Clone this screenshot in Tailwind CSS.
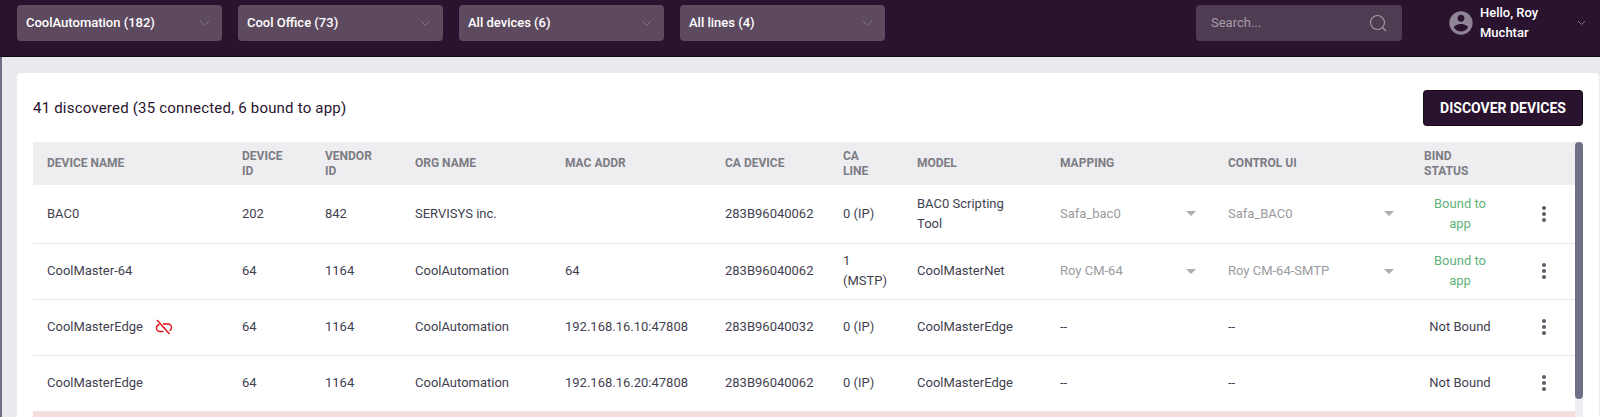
<!DOCTYPE html>
<html lang="en">
  <head>
    <meta charset="UTF-8" />
    <title>Devices</title>
    <script src="https://cdn.jsdelivr.net/npm/@tailwindcss/browser@4"></script>
  </head>
  <body class="bg-[#e9e9ef] font-['Roboto',sans-serif] overflow-hidden">
    <div class="flex flex-col h-[417px] overflow-hidden">
      <!-- top bar -->
      <div class="flex items-start h-[57px] shrink-0 bg-[#29132e] pl-[17px] pt-[5px] border-b border-black/60">
        <div class="flex items-center justify-between w-[205px] h-9 rounded bg-[#5e4a5f] pl-[9px] pr-3 mr-[16px] text-[13px] font-medium text-white">
          <span>CoolAutomation (182)</span>
          <svg class="w-[11px] h-[7px] text-[#85758a]" viewBox="0 0 11 7" fill="none" stroke="currentColor" stroke-width="1"><path d="M1 1l4.500 4.500L10 1" /></svg>
        </div>
        <div class="flex items-center justify-between w-[205px] h-9 rounded bg-[#5e4a5f] pl-[9px] pr-3 mr-[16px] text-[13px] font-medium text-white">
          <span>Cool Office (73)</span>
          <svg class="w-[11px] h-[7px] text-[#85758a]" viewBox="0 0 11 7" fill="none" stroke="currentColor" stroke-width="1"><path d="M1 1l4.500 4.500L10 1" /></svg>
        </div>
        <div class="flex items-center justify-between w-[205px] h-9 rounded bg-[#5e4a5f] pl-[9px] pr-3 mr-[16px] text-[13px] font-medium text-white">
          <span>All devices (6)</span>
          <svg class="w-[11px] h-[7px] text-[#85758a]" viewBox="0 0 11 7" fill="none" stroke="currentColor" stroke-width="1"><path d="M1 1l4.500 4.500L10 1" /></svg>
        </div>
        <div class="flex items-center justify-between w-[205px] h-9 rounded bg-[#5e4a5f] pl-[9px] pr-3 text-[13px] font-medium text-white">
          <span>All lines (4)</span>
          <svg class="w-[11px] h-[7px] text-[#85758a]" viewBox="0 0 11 7" fill="none" stroke="currentColor" stroke-width="1"><path d="M1 1l4.500 4.500L10 1" /></svg>
        </div>
        <div class="flex items-center justify-between w-[206px] h-9 rounded bg-[#4e3d52] ml-auto pl-[15px] pr-[15px] text-[13px] text-[#a79ca9]">
          <span>Search...</span>
          <svg class="w-[18px] h-[18px] text-[#a79ca9]" viewBox="0 0 18 18" fill="none" stroke="currentColor" stroke-width="1.100"><circle cx="8.500" cy="8.500" r="7" /><path d="M13.500 13.500l3.500 3.500" /></svg>
        </div>
        <div class="flex items-center w-[198px] pl-[45px] h-[38px] -mt-[1px]">
          <svg class="w-7 h-7 text-[#8f8496] shrink-0" viewBox="0 0 24 24" fill="currentColor"><path d="M12 2C6.480 2 2 6.480 2 12s4.480 10 10 10 10-4.480 10-10S17.520 2 12 2zm0 3c1.660 0 3 1.340 3 3s-1.340 3-3 3-3-1.340-3-3 1.340-3 3-3zm0 14.200c-2.500 0-4.710-1.280-6-3.220.030-1.990 4-3.080 6-3.080 1.990 0 5.970 1.090 6 3.080-1.290 1.940-3.500 3.220-6 3.220z" /></svg>
          <div class="w-[90px] ml-[5px] text-[13px] leading-[20px] font-medium text-white">Hello, Roy Muchtar</div>
          <svg class="w-[9px] h-[6px] ml-auto mr-[14px] text-[#85758a]" viewBox="0 0 9 6" fill="none" stroke="currentColor" stroke-width="1"><path d="M1 1l3.500 3.500L8 1" /></svg>
        </div>
      </div>

      <!-- content -->
      <div class="flex-1 min-h-0 border-l-2 border-[#6f6f85] pl-[15px] pr-px pt-4 overflow-hidden">
        <div class="bg-white rounded-t h-[360px] pl-4 pr-4 overflow-hidden">
          <div class="flex items-center justify-between h-[69px] pt-[1px]">
            <span class="text-[15px] text-[#29132e] tracking-[0.2px]">41 discovered (35 connected, 6 bound to app)</span>
            <button class="w-[160px] h-9 rounded bg-[#29132e] text-[14px] font-bold text-white border border-black/40">DISCOVER DEVICES</button>
          </div>
          <div class="flex h-[280px]">
            <table class="w-[1542px] table-fixed text-[13px] text-[#3f3f50] border-collapse self-start">
              <colgroup>
                <col class="w-[209px]" />
                <col class="w-[83px]" />
                <col class="w-[90px]" />
                <col class="w-[150px]" />
                <col class="w-[160px]" />
                <col class="w-[118px]" />
                <col class="w-[74px]" />
                <col class="w-[143px]" />
                <col class="w-[168px]" />
                <col class="w-[196px]" />
                <col class="w-[104px]" />
                <col class="w-[47px]" />
              </colgroup>
              <thead>
                <tr class="h-[43px] bg-[#eeeef0] text-left text-[12px] leading-[15px] font-bold text-[#7c7c85]">
                  <th class="pl-[14px] font-bold">DEVICE NAME</th>
                  <th class="font-bold">DEVICE<br />ID</th>
                  <th class="font-bold">VENDOR<br />ID</th>
                  <th class="font-bold">ORG NAME</th>
                  <th class="font-bold">MAC ADDR</th>
                  <th class="font-bold">CA DEVICE</th>
                  <th class="font-bold">CA<br />LINE</th>
                  <th class="font-bold">MODEL</th>
                  <th class="font-bold">MAPPING</th>
                  <th class="font-bold">CONTROL UI</th>
                  <th class="font-bold">BIND<br />STATUS</th>
                  <th></th>
                </tr>
              </thead>
              <tbody class="leading-[20px]">
                <tr class="h-[58px] border-b border-[#e9e9ec]">
                  <td class="pl-[14px]">BAC0</td>
                  <td>202</td>
                  <td>842</td>
                  <td>SERVISYS inc.</td>
                  <td></td>
                  <td>283B96040062</td>
                  <td>0 (IP)</td>
                  <td>BAC0 Scripting<br />Tool</td>
                  <td class="text-[#9a9a9f]">
                    <div class="flex items-center justify-between w-[136px]">Safa_bac0<span class="w-0 h-0 border-x-[5px] border-x-transparent border-t-[5px] border-t-[#aeaeb2]"></span></div>
                  </td>
                  <td class="text-[#9a9a9f]">
                    <div class="flex items-center justify-between w-[166px]">Safa_BAC0<span class="w-0 h-0 border-x-[5px] border-x-transparent border-t-[5px] border-t-[#aeaeb2]"></span></div>
                  </td>
                  <td class="text-[#5fb37a]"><div class="w-[72px] text-center">Bound to app</div></td>
                  <td>
                    <div class="flex flex-col items-center gap-[2px] w-[8px] ml-[12px]"><i class="w-1 h-1 rounded-full bg-[#5c5c68]"></i><i class="w-1 h-1 rounded-full bg-[#5c5c68]"></i><i class="w-1 h-1 rounded-full bg-[#5c5c68]"></i></div>
                  </td>
                </tr>
                <tr class="h-[56px] border-b border-[#e9e9ec]">
                  <td class="pl-[14px]">CoolMaster-64</td>
                  <td>64</td>
                  <td>1164</td>
                  <td>CoolAutomation</td>
                  <td>64</td>
                  <td>283B96040062</td>
                  <td>1<br />(MSTP)</td>
                  <td>CoolMasterNet</td>
                  <td class="text-[#9a9a9f]">
                    <div class="flex items-center justify-between w-[136px]">Roy CM-64<span class="w-0 h-0 border-x-[5px] border-x-transparent border-t-[5px] border-t-[#aeaeb2]"></span></div>
                  </td>
                  <td class="text-[#9a9a9f]">
                    <div class="flex items-center justify-between w-[166px]">Roy CM-64-SMTP<span class="w-0 h-0 border-x-[5px] border-x-transparent border-t-[5px] border-t-[#aeaeb2]"></span></div>
                  </td>
                  <td class="text-[#5fb37a]"><div class="w-[72px] text-center">Bound to app</div></td>
                  <td>
                    <div class="flex flex-col items-center gap-[2px] w-[8px] ml-[12px]"><i class="w-1 h-1 rounded-full bg-[#5c5c68]"></i><i class="w-1 h-1 rounded-full bg-[#5c5c68]"></i><i class="w-1 h-1 rounded-full bg-[#5c5c68]"></i></div>
                  </td>
                </tr>
                <tr class="h-[56px] border-b border-[#e9e9ec]">
                  <td class="pl-[14px]">
                    <div class="flex items-center">
                      CoolMasterEdge
                      <svg class="w-5 h-5 ml-[11px] text-[#e3141c]" viewBox="0 0 20 20" fill="none" stroke="currentColor" stroke-width="1.400"><path d="M5.500 7.500C3.500 8 2.500 9.500 2.500 11c0 2 1.700 3.500 3.500 3.500h3.500" /><path d="M9 7h5c2 0 3.500 1.700 3.500 3.500 0 1.300-.7 2.500-2 3.100" /><path d="M9.500 10.800H11" /><path d="M3 3l12.500 14" /></svg>
                    </div>
                  </td>
                  <td>64</td>
                  <td>1164</td>
                  <td>CoolAutomation</td>
                  <td>192.168.16.10:47808</td>
                  <td>283B96040032</td>
                  <td>0 (IP)</td>
                  <td>CoolMasterEdge</td>
                  <td>--</td>
                  <td>--</td>
                  <td><div class="w-[72px] text-center whitespace-nowrap">Not Bound</div></td>
                  <td>
                    <div class="flex flex-col items-center gap-[2px] w-[8px] ml-[12px]"><i class="w-1 h-1 rounded-full bg-[#5c5c68]"></i><i class="w-1 h-1 rounded-full bg-[#5c5c68]"></i><i class="w-1 h-1 rounded-full bg-[#5c5c68]"></i></div>
                  </td>
                </tr>
                <tr class="h-[56px] border-b border-[#e9e9ec]">
                  <td class="pl-[14px]">CoolMasterEdge</td>
                  <td>64</td>
                  <td>1164</td>
                  <td>CoolAutomation</td>
                  <td>192.168.16.20:47808</td>
                  <td>283B96040062</td>
                  <td>0 (IP)</td>
                  <td>CoolMasterEdge</td>
                  <td>--</td>
                  <td>--</td>
                  <td><div class="w-[72px] text-center whitespace-nowrap">Not Bound</div></td>
                  <td>
                    <div class="flex flex-col items-center gap-[2px] w-[8px] ml-[12px]"><i class="w-1 h-1 rounded-full bg-[#5c5c68]"></i><i class="w-1 h-1 rounded-full bg-[#5c5c68]"></i><i class="w-1 h-1 rounded-full bg-[#5c5c68]"></i></div>
                  </td>
                </tr>
                <tr class="h-[56px] bg-[#f8dedb]"><td colspan="12"></td></tr>
              </tbody>
            </table>
            <div class="w-2 bg-[#efeff3] shrink-0">
              <div class="h-[257px] rounded bg-[#6f6f85]"></div>
            </div>
          </div>
        </div>
      </div>
    </div>
  </body>
</html>
